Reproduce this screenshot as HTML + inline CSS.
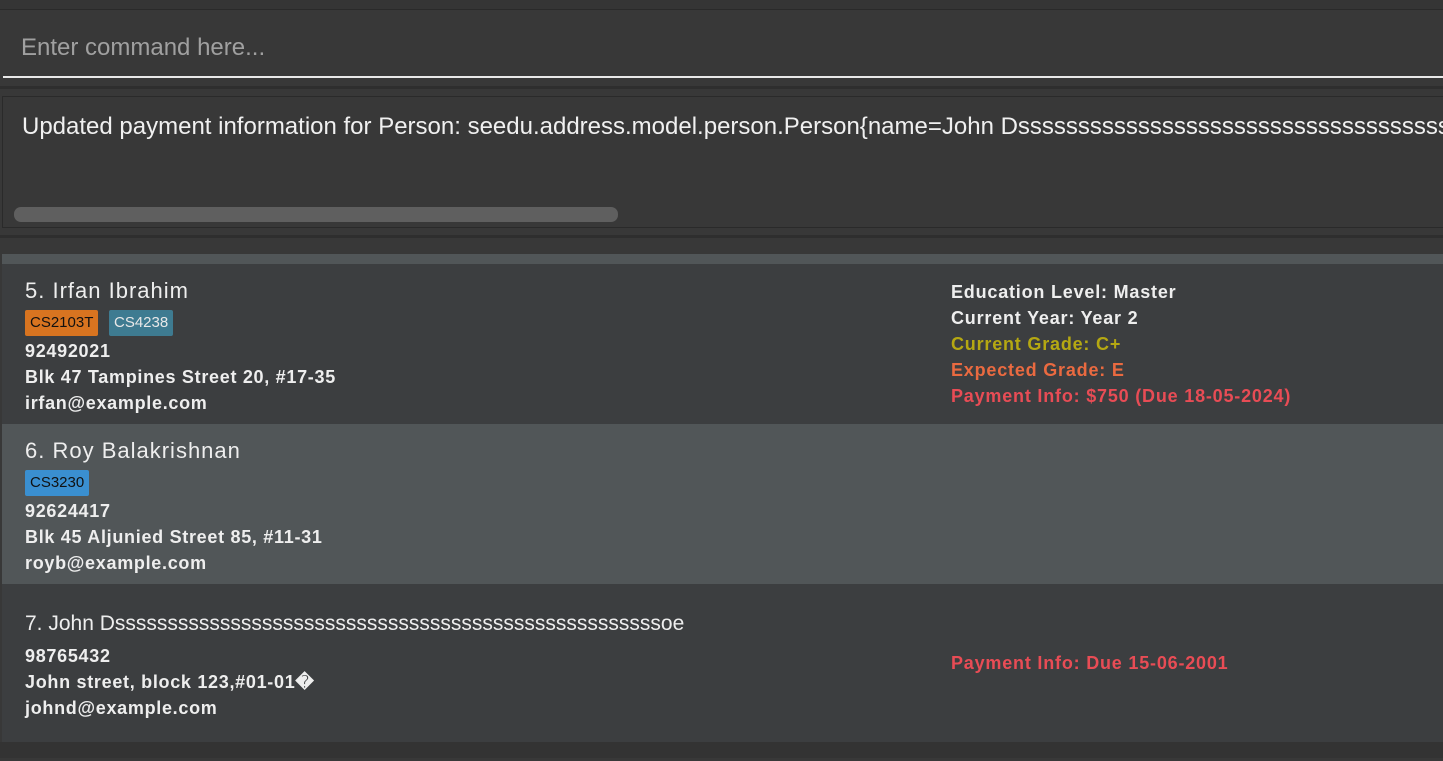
<!DOCTYPE html>
<html><head><meta charset="utf-8"><style>
*{margin:0;padding:0;box-sizing:border-box}
html,body{width:1443px;height:761px;overflow:hidden}
body{background:#383838;position:relative;font-family:"Liberation Sans",sans-serif}
.a{position:absolute}
.b{font-weight:bold;font-size:18px;letter-spacing:0.7px;color:#eeeeee;white-space:nowrap;position:absolute;left:25px}
.n{font-size:22px;letter-spacing:1px;color:#eeeeee;white-space:nowrap;position:absolute;left:25px}
.r{font-weight:bold;font-size:18px;letter-spacing:0.8px;white-space:nowrap;position:absolute;left:951px}
.tag{position:absolute;height:26px;font-size:15px;line-height:26px;padding:0 5px;border-radius:2px}
.clip{position:absolute;left:0;top:0;width:1443px;height:761px;overflow:hidden}
</style></head><body><div class="clip">
<div class="a" style="left:0;top:0;width:1443px;height:10px;background:#353535;border-bottom:1px solid #2a2a2a"></div>
<div class="a" style="left:21px;top:34px;font-size:24px;color:#a0a0a0;white-space:nowrap">Enter command here...</div>
<div class="a" style="left:3px;top:76px;width:1440px;height:2px;background:#e8e8e8"></div>
<div class="a" style="left:0;top:86px;width:1443px;height:3px;background:#2e2e2e"></div>
<div class="a" style="left:2px;top:96px;width:1441px;height:132px;border:1px solid #2a2a2a;border-right:none;background:#383838;overflow:hidden">
<div class="a" style="left:19px;top:16px;font-size:24px;color:#f0f0f0;white-space:nowrap">Updated payment information for Person: seedu.address.model.person.Person{name=John Dsssssssssssssssssssssssssssssssssssssssssssssssssss</div>
<div class="a" style="left:11px;top:110px;width:604px;height:15px;background:#5f5f5f;border-radius:7px"></div>
</div>
<div class="a" style="left:0;top:235px;width:1443px;height:3px;background:#2e2e2e"></div>
<div class="a" style="left:2px;top:254px;width:1441px;height:10px;background:#515658"></div>
<div class="a" style="left:2px;top:264px;width:1441px;height:160px;background:#3c3e40"></div>
<div class="a" style="left:2px;top:424px;width:1441px;height:160px;background:#515658"></div>
<div class="a" style="left:2px;top:584px;width:1441px;height:158px;background:#3c3e40;overflow:hidden"></div>
<div class="a" style="left:0;top:742px;width:1443px;height:16px;background:#333"></div>

<div class="n" style="top:278px">5. Irfan Ibrahim</div>
<div class="tag" style="left:25px;top:310px;background:#d87420;color:#111">CS2103T</div>
<div class="tag" style="left:109px;top:310px;background:#3e7b91;color:#e8e8e8">CS4238</div>
<div class="b" style="top:341px">92492021</div>
<div class="b" style="top:367px">Blk 47 Tampines Street 20, #17-35</div>
<div class="b" style="top:393px">irfan@example.com</div>
<div class="r" style="top:282px;color:#eeeeee">Education Level: Master</div>
<div class="r" style="top:308px;color:#eeeeee">Current Year: Year 2</div>
<div class="r" style="top:334px;color:#b5a812">Current Grade: C+</div>
<div class="r" style="top:360px;color:#ea6a40">Expected Grade: E</div>
<div class="r" style="top:386px;color:#e84c55">Payment Info: $750 (Due 18-05-2024)</div>

<div class="n" style="top:438px">6. Roy Balakrishnan</div>
<div class="tag" style="left:25px;top:470px;background:#3a8fd0;color:#111">CS3230</div>
<div class="b" style="top:501px">92624417</div>
<div class="b" style="top:527px">Blk 45 Aljunied Street 85, #11-31</div>
<div class="b" style="top:553px">royb@example.com</div>

<div class="n" style="top:612px;letter-spacing:0;font-size:21px">7. John Dssssssssssssssssssssssssssssssssssssssssssssssssssssoe</div>
<div class="b" style="top:646px">98765432</div>
<div class="b" style="top:672px">John street, block 123,#01-01&#xFFFD;</div>
<div class="b" style="top:698px">johnd@example.com</div>
<div class="r" style="top:653px;color:#e84c55">Payment Info: Due 15-06-2001</div>
</div></body></html>
